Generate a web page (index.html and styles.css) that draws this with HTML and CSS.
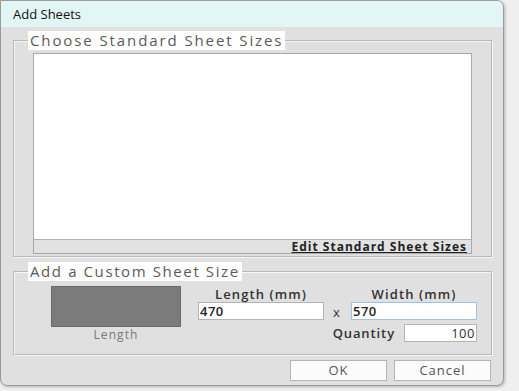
FILE: index.html
```html
<!DOCTYPE html>
<html>
<head>
<meta charset="utf-8">
<link rel="stylesheet" href="styles.css">
</head>
<body>
<div class="window">
  <div class="titlebar">Add Sheets</div>
  <div class="content">
    <fieldset class="group group-std">
      <legend>Choose Standard Sheet Sizes</legend>
      <div class="listbox">
        <div class="list-area"></div>
        <div class="list-footer"><span class="edit-link">Edit Standard Sheet Sizes</span></div>
      </div>
    </fieldset>
    <fieldset class="group group-custom">
      <legend>Add a Custom Sheet Size</legend>
      <div class="custom-row">
        <div class="preview-col">
          <div class="preview"></div>
          <div class="preview-label">Length</div>
        </div>
        <div class="fields">
          <div class="field-label">Length (mm)</div>
          <div></div>
          <div class="field-label">Width (mm)</div>
          <div class="input">470</div>
          <div class="times">x</div>
          <div class="input input-focus">570</div>
          <div class="qty-row">
            <span class="qty-label">Quantity</span>
            <div class="input input-qty">100</div>
          </div>
        </div>
      </div>
    </fieldset>
    <div class="buttons">
      <div class="btn">OK</div>
      <div class="btn">Cancel</div>
    </div>
  </div>
</div>
</body>
</html>
```
FILE: styles.css
```css
html, body {
  margin: 0;
  padding: 0;
}
body {
  width: 519px;
  height: 391px;
  background: #efefef;
  font-family: "Open Sans", "Noto Sans", sans-serif;
  overflow: hidden;
}
.window {
  width: 502px;
  height: 384px;
  background: #e0e0e0;
  border: 1px solid #9a9a9a;
  border-radius: 0 7px 7px 7px;
  overflow: hidden;
  box-shadow: 1px 1px 3px rgba(0,0,0,0.25);
}
.titlebar {
  height: 26px;
  line-height: 27px;
  background: #e3f6f6;
  padding-left: 12px;
  font-size: 13px;
  color: #111;
}
.content {
  padding: 0 11px 0 12px;
}
.group {
  margin: 0;
  padding: 0;
  border: 1px solid #b9b9b9;
  box-shadow: inset 1px 1px 0 #f7f7f7, 1px 1px 0 #f7f7f7;
  min-width: 0;
}
.group legend {
  margin-left: 14px;
  padding: 0 2px;
  background: #fff;
  height: 19px;
  line-height: 19px;
  font-size: 15px;
  color: #5a5a5a;
  letter-spacing: 1.6px;
}
.group-std legend {
  letter-spacing: 1.9px;
}
.group-std {
  margin-top: 4px;
  padding: 3px 0 2px 0;
}
.listbox {
  margin: 0 19px;
  height: 199px;
  border: 1px solid #a8a8a8;
  display: flex;
  flex-direction: column;
  background: #fff;
}
.list-area {
  flex: 1;
  background: #fff;
}
.list-footer {
  height: 13px;
  border-top: 1px solid #b0b0b0;
  background: #e2e2e2;
  display: flex;
  justify-content: flex-end;
  align-items: center;
  padding-right: 4px;
}
.edit-link {
  font-size: 12px;
  font-weight: 700;
  color: #222;
  text-decoration: underline;
  line-height: 13px;
  letter-spacing: 1px;
}
.group-custom {
  margin-top: 5px;
  padding: 5px 0 12px 0;
}
.custom-row {
  display: flex;
  align-items: flex-start;
}
.preview-col {
  margin-left: 37px;
  width: 130px;
  display: flex;
  flex-direction: column;
  align-items: center;
}
.preview {
  width: 128px;
  height: 39px;
  background: #7b7b7b;
  border: 1px solid #6a6a6a;
}
.preview-label {
  font-size: 12px;
  color: #7a7a7a;
  line-height: 15px;
  letter-spacing: 1.1px;
}
.fields {
  margin-left: 17px;
  margin-top: 1px;
  display: grid;
  grid-template-columns: 126px 27px 126px;
  grid-template-rows: 15px 18px 18px;
  row-gap: 0;
}
.field-label {
  font-size: 13px;
  font-weight: 600;
  color: #333;
  text-align: center;
  line-height: 15px;
  letter-spacing: 1.1px;
}
.input {
  box-sizing: border-box;
  height: 18px;
  background: #fff;
  border: 1px solid #b4b4b4;
  font-size: 13px;
  font-weight: 600;
  color: #222;
  line-height: 16px;
  padding-left: 1px;
  letter-spacing: 0.5px;
}
.input-focus {
  border-color: #9fc3e0;
}
.times {
  font-size: 13px;
  color: #333;
  text-align: center;
  line-height: 20px;
  padding-right: 2px;
}
.qty-row {
  grid-column: 1 / 4;
  margin-top: 7px;
  display: flex;
  justify-content: flex-end;
  align-items: center;
}
.qty-label {
  font-size: 13px;
  font-weight: 600;
  color: #333;
  margin-right: 9px;
  letter-spacing: 0.9px;
}
.input-qty {
  width: 73px;
  text-align: right;
  font-weight: 400;
  color: #333;
  padding-right: 1px;
}
.buttons {
  margin-top: 5px;
  display: flex;
  justify-content: flex-end;
  gap: 7px;
  padding-right: 1px;
}
.btn {
  box-sizing: border-box;
  width: 97px;
  height: 21px;
  background: #fbfbfb;
  border: 1px solid #b5b5b5;
  font-size: 13px;
  color: #555;
  text-align: center;
  line-height: 19px;
  letter-spacing: 1px;
}
```
